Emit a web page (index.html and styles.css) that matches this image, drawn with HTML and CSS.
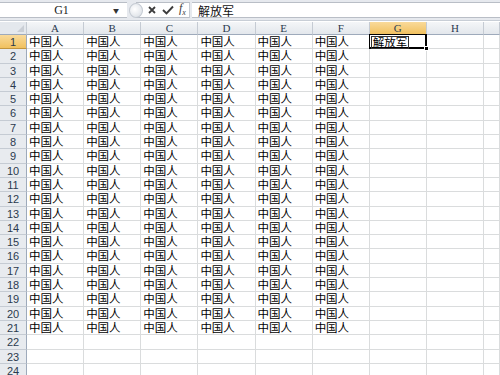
FILE: index.html
```html
<!DOCTYPE html>
<html lang="zh-CN">
<head>
    <meta charset="UTF-8">
    <title>Book1</title>
    <link rel="stylesheet" href="styles.css">
</head>
<body>
    <div class="formula-bar">
        <div class="name-box">
            <span class="cell-ref">G1</span>
            <span class="dropdown">▼</span>
        </div>
        <div class="grip"></div>
        <div class="fx-buttons">
            <svg class="icon" width="10" height="10" viewBox="0 0 10 10">
                <path d="M2 2 L8 8 M8 2 L2 8" stroke="#3c3c3c" stroke-width="1.8" fill="none"/>
            </svg>
            <svg class="icon" width="12" height="10" viewBox="0 0 12 10">
                <path d="M1 5 L4.5 8.5 L11 1.5" stroke="#3c3c3c" stroke-width="1.9" fill="none"/>
            </svg>
            <span class="fx">f<sub>x</sub></span>
        </div>
        <div class="formula-input">解放军</div>
    </div>

    <div class="sheet" id="sheet"></div>

    <script>
        // Build the grid
        const cols = ['A', 'B', 'C', 'D', 'E', 'F', 'G', 'H', ''];
        const rows = 24;
        const sheet = document.getElementById('sheet');
        let html = '<div class="corner"></div>';

        cols.forEach(c => {
            html += `<div class="col-head${c === 'G' ? ' active' : ''}">${c}</div>`;
        });

        for (let r = 1; r <= rows; r++) {
            html += `<div class="row-head${r === 1 ? ' active' : ''}">${r}</div>`;
            cols.forEach((c, i) => {
                let text = '';
                if (r <= 21 && i < 6) text = '中国人';
                if (r === 1 && c === 'G') {
                    html += '<div class="cell selected"><span class="editor">解放军</span><span class="handle"></span></div>';
                } else {
                    html += `<div class="cell">${text}</div>`;
                }
            });
        }
        sheet.innerHTML = html;
    </script>
</body>
</html>
```

FILE: styles.css
```css
* {
    box-sizing: border-box;
}

body {
    margin: 0;
    width: 500px;
    height: 375px;
    overflow: hidden;
    background: #fff;
    font-family: "Noto Sans CJK SC", "Noto Sans", sans-serif;
}

/* Formula bar */
.formula-bar {
    display: flex;
    height: 21px;
    padding-top: 2px;
    padding-bottom: 2px;
    background: #e6e9ee;
    border-bottom: 1px solid #c8ced6;
}

.name-box {
    width: 127px;
    display: flex;
    align-items: center;
    background: #fff;
    border-top: 1px solid #b9bec6;
    border-bottom: 1px solid #b9bec6;
}

.cell-ref {
    flex: 1;
    text-align: center;
    padding-left: 10px;
    font-family: "Liberation Serif", serif;
    font-size: 12px;
    color: #222;
}

.dropdown {
    width: 14px;
    font-size: 6px;
    color: #333;
}

.grip {
    width: 9px;
    background: #e6e9ee;
    position: relative;
}

.grip::after {
    content: '';
    position: absolute;
    left: 2px;
    top: 1px;
    width: 12px;
    height: 13px;
    border-radius: 50%;
    background: radial-gradient(circle at 40% 40%, #fff, #d6dbe2);
    border: 1px solid #c4cad2;
}

.fx-buttons {
    width: 54px;
    display: flex;
    align-items: center;
    gap: 5px;
    padding-left: 11px;
    background: #fff;
    border-top: 1px solid #b9bec6;
    border-bottom: 1px solid #b9bec6;
    border-right: 1px solid #c4cad2;
}

.fx {
    font-family: "Liberation Serif", serif;
    font-style: italic;
    font-size: 12px;
    color: #3c3c3c;
    line-height: 1;
}

.fx sub {
    font-size: 8px;
}

.formula-input {
    flex: 1;
    margin-left: 2px;
    padding-left: 6px;
    background: #fff;
    border-top: 1px solid #b9bec6;
    border-bottom: 1px solid #b9bec6;
    font-size: 12px;
    line-height: 15px;
    color: #111;
}

/* Sheet grid */
.sheet {
    display: grid;
    grid-template-columns: 27px repeat(8, 57.14px) 1fr;
    grid-template-rows: 13px;
    grid-auto-rows: 14.3px;
    border-top: 1px solid #fff;
}

.corner {
    background: #e4e8ed;
    border-right: 1px solid #c5cbd3;
    border-bottom: 1px solid #9eaabb;
    position: relative;
}

.corner::after {
    content: '';
    position: absolute;
    right: 2px;
    bottom: 2px;
    border-left: 7px solid transparent;
    border-bottom: 7px solid #c9ced5;
}

.col-head {
    background: linear-gradient(#f4f6f8, #e3e7ec);
    border-right: 1px solid #c5cbd3;
    border-bottom: 1px solid #9eaabb;
    text-align: center;
    font-family: "Liberation Serif", serif;
    font-size: 11px;
    line-height: 12px;
    color: #2b3a4e;
}

.row-head {
    background: #e8ebef;
    border-right: 1px solid #9eaabb;
    border-bottom: 1px solid #c5cbd3;
    text-align: center;
    font-family: "Liberation Sans", sans-serif;
    font-size: 11px;
    line-height: 14px;
    color: #2b3a4e;
}

.col-head.active,
.row-head.active {
    background: linear-gradient(#f9da9a, #f1c15f);
    border-bottom-color: #c2953e;
}

.cell {
    border-right: 1px solid #dadcdd;
    border-bottom: 1px solid #dadcdd;
    padding-left: 2px;
    font-size: 11.5px;
    line-height: 13px;
    color: #000;
    white-space: nowrap;
}

.cell.selected {
    position: relative;
    border: 2px solid #000;
    border-top-width: 1px;
    border-left-width: 1px;
    padding-left: 1px;
    margin: -1px 0 0 -1px;
}

.editor {
    display: inline-block;
    border: 1px solid #333;
    padding: 0 1px;
    line-height: 11px;
    margin-top: 1px;
}

.handle {
    position: absolute;
    right: -4px;
    bottom: -4px;
    width: 5px;
    height: 5px;
    background: #000;
    border: 1px solid #fff;
}
```
